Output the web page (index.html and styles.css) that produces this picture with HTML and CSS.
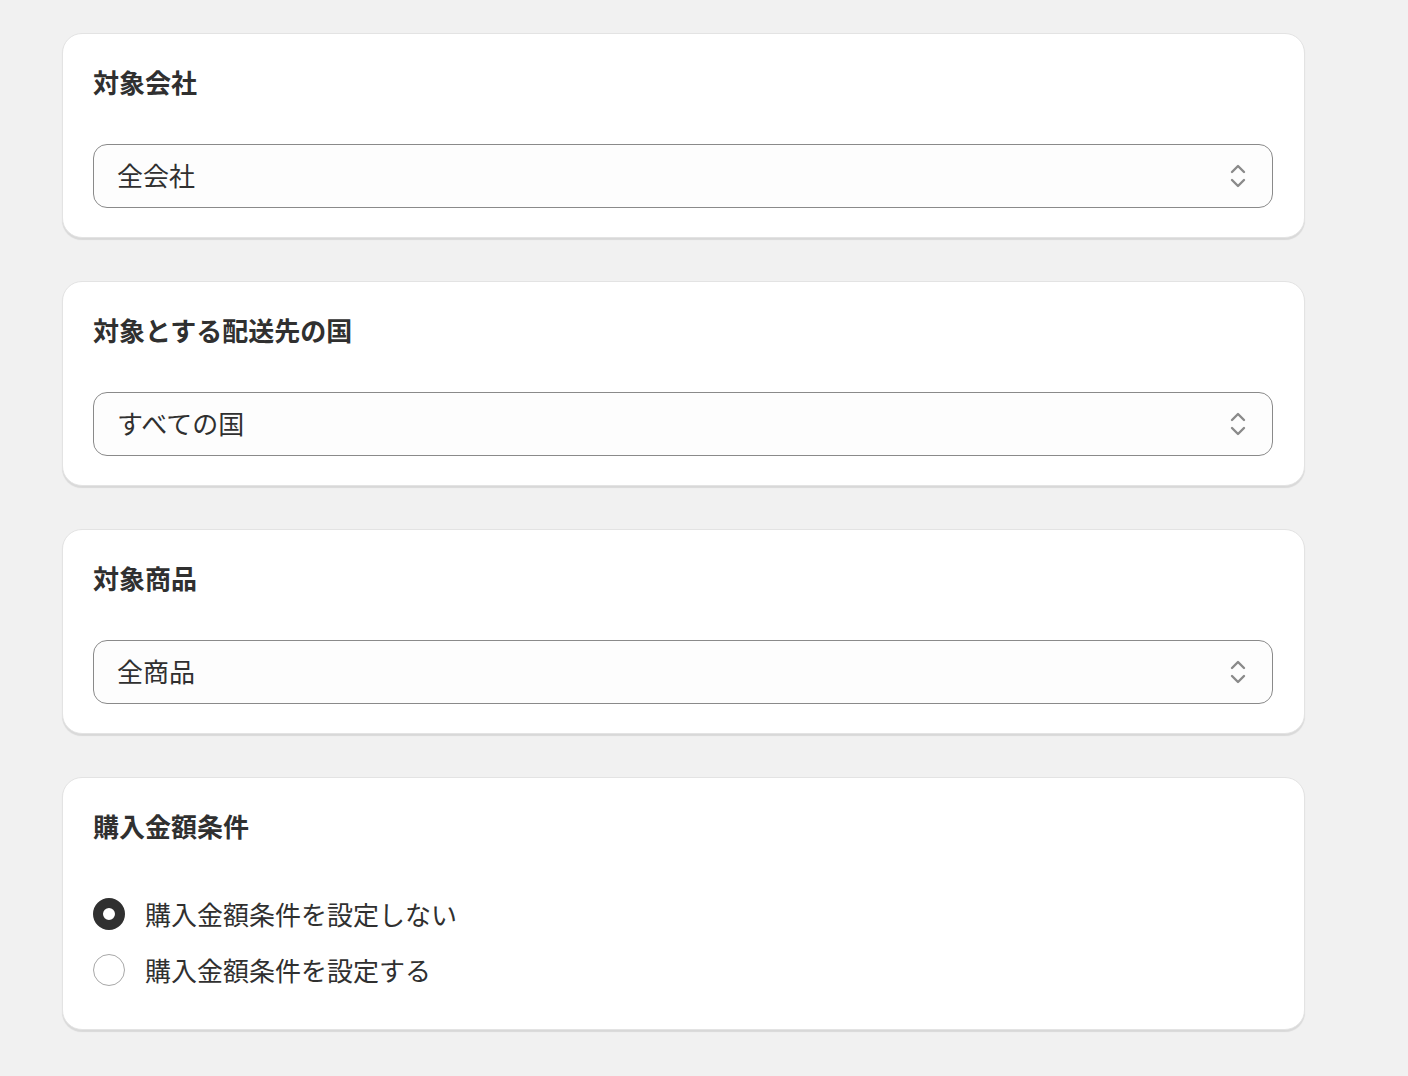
FILE: index.html
```html
<!DOCTYPE html>
<html lang="ja">
<head>
    <meta charset="UTF-8">
    <meta name="viewport" content="width=device-width, initial-scale=1.0">
    <title>条件設定</title>
    <link rel="stylesheet" href="styles.css">
</head>
<body>
    <div class="page">
        <!-- 対象会社 -->
        <section class="card">
            <h2 class="card-title">対象会社</h2>
            <div class="select">
                <span class="select-value">全会社</span>
                <svg class="select-icon" viewBox="0 0 20 28" width="20" height="28">
                    <path d="M4 10 L10 4 L16 10 M4 18 L10 24 L16 18" fill="none" stroke="#8a8a8a" stroke-width="2.4" stroke-linecap="round" stroke-linejoin="round"/>
                </svg>
            </div>
        </section>

        <!-- 対象とする配送先の国 -->
        <section class="card">
            <h2 class="card-title">対象とする配送先の国</h2>
            <div class="select">
                <span class="select-value">すべての国</span>
                <svg class="select-icon" viewBox="0 0 20 28" width="20" height="28">
                    <path d="M4 10 L10 4 L16 10 M4 18 L10 24 L16 18" fill="none" stroke="#8a8a8a" stroke-width="2.4" stroke-linecap="round" stroke-linejoin="round"/>
                </svg>
            </div>
        </section>

        <!-- 対象商品 -->
        <section class="card">
            <h2 class="card-title">対象商品</h2>
            <div class="select">
                <span class="select-value">全商品</span>
                <svg class="select-icon" viewBox="0 0 20 28" width="20" height="28">
                    <path d="M4 10 L10 4 L16 10 M4 18 L10 24 L16 18" fill="none" stroke="#8a8a8a" stroke-width="2.4" stroke-linecap="round" stroke-linejoin="round"/>
                </svg>
            </div>
        </section>

        <!-- 購入金額条件 -->
        <section class="card card-radio">
            <h2 class="card-title">購入金額条件</h2>
            <div class="radio-list">
                <label class="radio-row">
                    <span class="radio checked"></span>
                    <span class="radio-label">購入金額条件を設定しない</span>
                </label>
                <label class="radio-row">
                    <span class="radio"></span>
                    <span class="radio-label">購入金額条件を設定する</span>
                </label>
            </div>
        </section>
    </div>
</body>
</html>
```

FILE: styles.css
```css
body {
    margin: 0;
    background-color: #f1f1f1;
    font-family: "Noto Sans CJK JP", "Noto Sans", sans-serif;
    color: #303030;
}
.page {
    width: 1243px;
    margin-left: 62px;
    padding-top: 33px;
    padding-bottom: 40px;
    display: flex;
    flex-direction: column;
    gap: 43px;
}
.card {
    background-color: #ffffff;
    border: 1px solid #e3e3e3;
    border-radius: 20px;
    box-shadow: 0 2px 1px rgba(0, 0, 0, 0.1);
    padding: 30px 31px 29px 30px;
}
.card-title {
    margin: 0;
    font-size: 26px;
    font-weight: 700;
    line-height: 36px;
    color: #303030;
}
.select {
    margin-top: 44px;
    height: 62px;
    border: 1px solid #8a8a8a;
    border-radius: 14px;
    background-color: #fdfdfd;
    display: flex;
    align-items: center;
    justify-content: space-between;
    padding: 0 24px 0 23px;
}
.select-value {
    font-size: 26px;
    line-height: 32px;
    margin-top: -2px;
}
.select-icon {
    display: block;
}
.card-radio {
    padding-bottom: 43px;
}
.radio-list {
    margin-top: 54px;
    display: flex;
    flex-direction: column;
    gap: 24px;
}
.radio-row {
    display: flex;
    align-items: center;
    gap: 20px;
}
.radio {
    width: 32px;
    height: 32px;
    border-radius: 50%;
    border: 1px solid #a8a8a8;
    background-color: #ffffff;
    box-sizing: border-box;
}
.radio.checked {
    border: 10px solid #303030;
}
.radio-label {
    font-size: 26px;
    line-height: 32px;
}
```
